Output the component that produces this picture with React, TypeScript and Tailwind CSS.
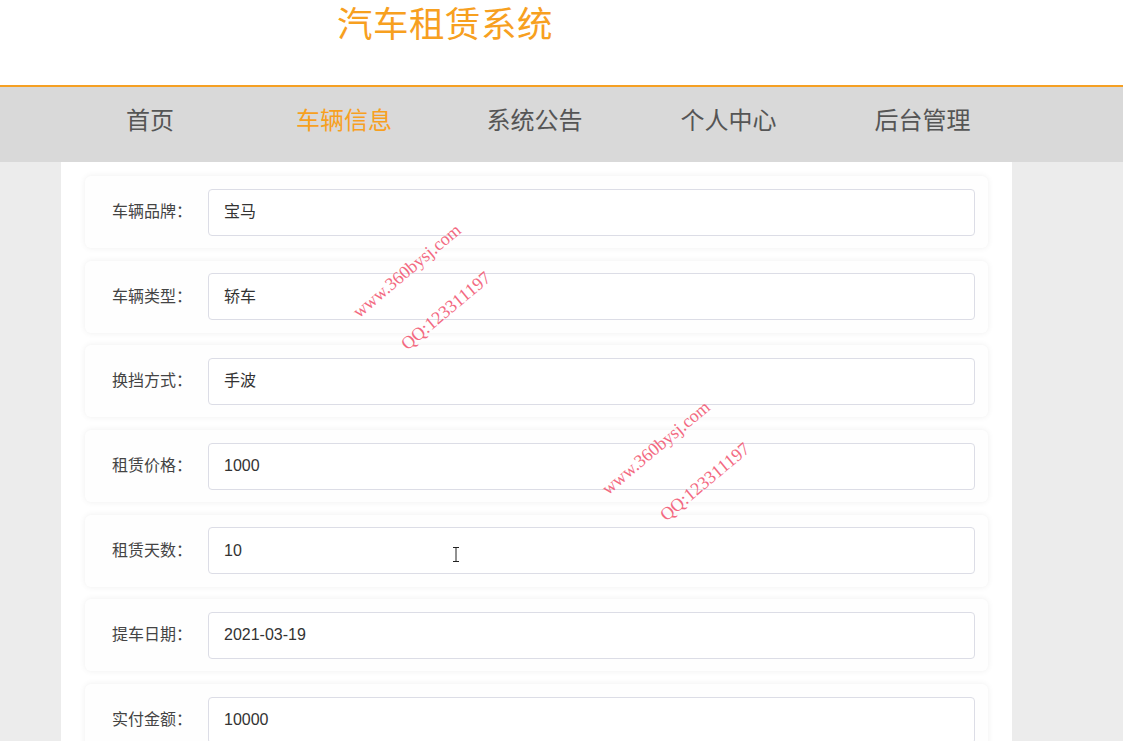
import React from "react";

const navItems = [
  { name: "首页", w: "w-[194px]" },
  { name: "车辆信息", w: "w-[194px]" },
  { name: "系统公告", w: "w-[187px]" },
  { name: "个人中心", w: "w-[201px]" },
  { name: "后台管理", w: "w-[187px]" },
];

const fields = [
  { label: "车辆品牌：", value: "宝马" },
  { label: "车辆类型：", value: "轿车" },
  { label: "换挡方式：", value: "手波" },
  { label: "租赁价格：", value: "1000" },
  { label: "租赁天数：", value: "10" },
  { label: "提车日期：", value: "2021-03-19" },
  { label: "实付金额：", value: "10000" },
];

const marks = [
  { x: 407, y: 271, text: "www.360bysj.com" },
  { x: 446, y: 311, text: "QQ:123311197" },
  { x: 656, y: 448, text: "www.360bysj.com" },
  { x: 705, y: 482, text: "QQ:123311197" },
];

export default function App() {
  return (
    <div
      className="relative h-[741px] w-full overflow-hidden bg-[#ececec]"
      style={{ fontFamily: '"Liberation Sans", "Noto Sans CJK SC", sans-serif' }}
    >
      {/* 头部 */}
      <header className="h-[85px] bg-white">
        <h1 className="pl-[337px] pt-[2px] text-[35.5px] leading-[46px] text-[#f7a01f] tracking-[0.5px]">
          汽车租赁系统
        </h1>
      </header>

      {/* 导航 */}
      <nav className="flex h-[77px] items-center border-t-2 border-[#f5a023] bg-[#d9d9d9] pb-[8px] pl-[53px]">
        {navItems.map((item, i) => (
          <div
            key={item.name}
            className={`${item.w} text-center text-[24px] leading-none ${i === 1 ? "text-[#f7a01f]" : "text-[#555555]"}`}
          >
            {item.name}
          </div>
        ))}
      </nav>

      {/* 内容 */}
      <div className="ml-[61px] w-[951px] bg-white px-[24px] pt-[14px] pb-8">
        <div className="flex flex-col gap-[12.7px]">
          {fields.map((f) => (
            <div
              key={f.label}
              className="flex h-[72px] items-center rounded-md bg-[#fefefe] pr-[13px] shadow-[0_0_6px_rgba(0,0,0,0.07)]"
            >
              <label className="w-[123px] shrink-0 pl-[27px] text-[16px] text-[#444]">
                {f.label}
              </label>
              <div className="flex h-[47px] flex-1 items-center rounded-[4px] border border-[#dcdde6] bg-white px-[15px] text-[16px] text-[#333]">
                {f.value}
              </div>
            </div>
          ))}
        </div>
      </div>

      {/* 水印 */}
      {marks.map((m, i) => (
        <span
          key={i}
          className="pointer-events-none absolute whitespace-nowrap text-[18px] text-[#f2506c] opacity-85"
          style={{
            left: m.x,
            top: m.y,
            transform: "translate(-50%, -50%) rotate(-40deg)",
            fontFamily: '"Liberation Serif", serif',
          }}
        >
          {m.text}
        </span>
      ))}

      {/* 光标 */}
      <svg className="pointer-events-none absolute left-[452px] top-[547px]" width="8" height="15" viewBox="0 0 8 15">
        <path d="M1 0.5h6M4 0.5v14M1 14.5h6" stroke="#222" strokeWidth="1" fill="none" />
      </svg>
    </div>
  );
}
